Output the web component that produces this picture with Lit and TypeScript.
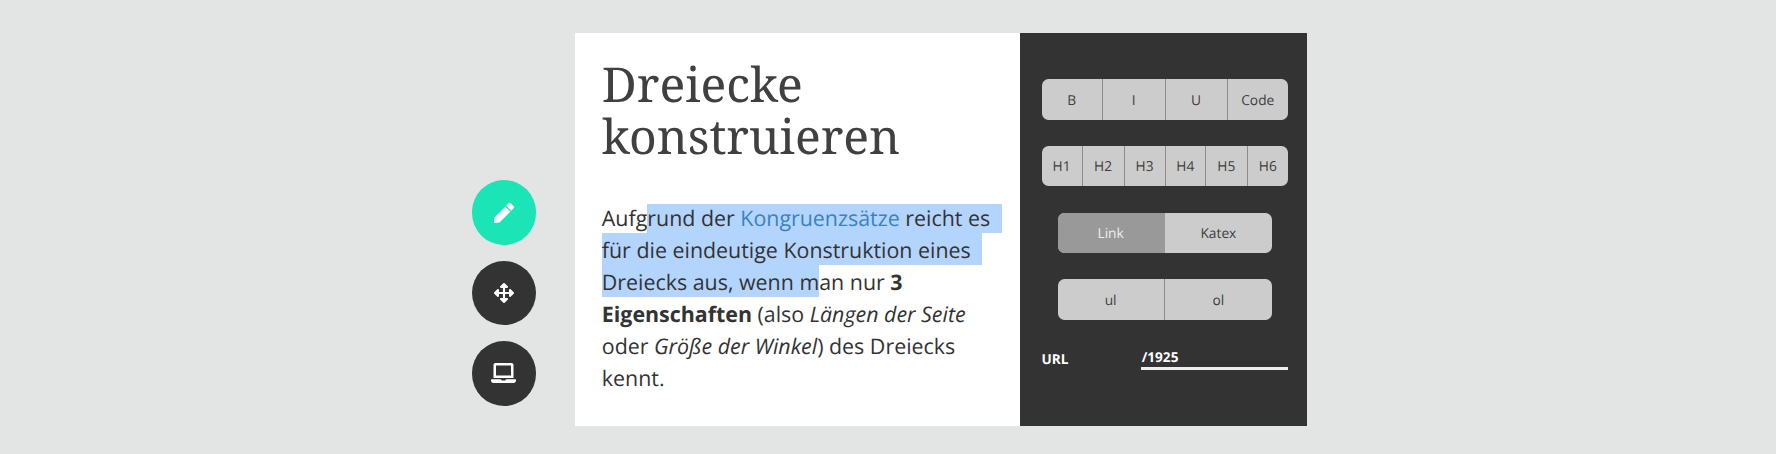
import { LitElement, html, css } from "lit";
import { customElement, property } from "lit/decorators.js";

@customElement("button-group")
class ButtonGroup extends LitElement {
  @property({ attribute: false }) items: string[] = [];
  @property() active = "";
  @property({ attribute: false }) widths = "";
  static styles = css`
    :host { display: block; }
    .group { display: grid; height: 40.5px; border-radius: 6.5px; overflow: hidden; background: #ccc; }
    button {
      all: unset; box-sizing: border-box; display: flex; align-items: center; justify-content: center;
      font: 13.75px "Open Sans", sans-serif; color: #404040; border-right: 1px solid #8b8b8b;
      text-rendering: geometricPrecision; padding-top: 1.6px;
    }
    button:last-child { border-right: 0; }
    button.active { background: #999; color: #eee; border-color: #999; }
  `;
  render() {
    return html`<div class="group" style="grid-template-columns:${this.widths}">
      ${this.items.map((i) => html`<button class=${i === this.active ? "active" : ""}>${i}</button>`)}
    </div>`;
  }
}

const penIcon = html`<svg class="icon" viewBox="0 0 512 512"><path d="M290.74 93.24l128.02 128.02-277.99 277.99-114.14 12.6C11.35 513.54-1.56 500.62.14 485.34l12.7-114.22 277.9-277.88zm207.2-19.06l-60.11-60.11c-18.75-18.75-49.16-18.75-67.91 0l-56.55 56.55 128.02 128.02 56.55-56.55c18.75-18.76 18.75-49.16 0-67.91z"/></svg>`;
const moveIcon = html`<svg class="icon" viewBox="0 0 512 512"><path d="M352.201 425.775l-79.196 79.196c-9.373 9.373-24.568 9.373-33.941 0l-79.196-79.196c-15.119-15.119-4.411-40.971 16.971-40.97h51.162L228 284H127.196v51.162c0 21.382-25.851 32.09-40.971 16.971L7.029 272.937c-9.373-9.373-9.373-24.569 0-33.941L86.225 159.8c15.119-15.119 40.971-4.411 40.971 16.971V228H228V127.196h-51.23c-21.382 0-32.09-25.851-16.971-40.971l79.196-79.196c9.373-9.373 24.568-9.373 33.941 0l79.196 79.196c15.119 15.119 4.411 40.971-16.971 40.971h-51.162V228h100.804v-51.162c0-21.382 25.851-32.09 40.97-16.971l79.196 79.196c9.373 9.373 9.373 24.569 0 33.941L425.773 352.2c-15.119 15.119-40.971 4.411-40.97-16.971V284H284v100.804h51.23c21.382 0 32.09 25.851 16.971 40.971z"/></svg>`;
const laptopIcon = html`<svg class="icon wide" viewBox="0 0 640 512"><path d="M624 416H381.54c-.74 19.81-14.71 32-32.74 32H288c-18.69 0-33.02-17.47-32.77-32H16c-8.8 0-16 7.2-16 16v16c0 35.2 28.8 64 64 64h512c35.2 0 64-28.8 64-64v-16c0-8.8-7.2-16-16-16zM576 48c0-26.4-21.6-48-48-48H112C85.6 0 64 21.6 64 48v336h512V48zm-64 272H128V64h384v256z"/></svg>`;

@customElement("app-root")
class AppRoot extends LitElement {
  static styles = css`
    :host { display: block; }
    .page {
      box-sizing: border-box; height: 454px; background: #e3e5e4; overflow: hidden;
      display: flex; padding: 32.5px 0 0 471.5px; font-family: "Open Sans", sans-serif;
      text-rendering: geometricPrecision;
    }
    .tools { display: flex; flex-direction: column; gap: 15.7px; width: 103.5px; padding-top: 147.7px; }
    .tool {
      all: unset; width: 64.8px; height: 64.8px; border-radius: 50%; background: #333;
      display: flex; align-items: center; justify-content: center;
    }
    .tool.on { background: #1be4b6; }
    .icon { width: 20px; height: 20px; fill: #fff; }
    .icon.wide { width: 25px; margin-bottom: 1px; }
    .card { display: flex; height: 393.5px; width: 732px; }
    .editor { width: 445px; background: #fff; box-sizing: border-box; padding: 26.5px 0 0 26.8px; white-space: nowrap; }
    h1 { margin: 0; font: 400 48.1px/52px "Noto Serif", "Droid Serif", "DejaVu Serif", serif; color: #404040; }
    h1 span { display: block; }
    p { margin: 40px 0 0; font-size: 21.4px; line-height: 32px; color: #333; }
    .sel { background: #b3d4fd; }
    .trail { padding-right: 11.5px; }
    .joined { padding-top: 3px; }
    .link { color: #3983c3; }
    .panel {
      flex: 1; background: #333; box-sizing: border-box; padding: 46.5px 19px 0 21.5px;
      display: flex; flex-direction: column; gap: 26.3px;
    }
    .inset { padding: 0 16px; }
    .url { display: flex; justify-content: space-between; color: #fff; font-size: 13.6px; font-weight: 700; }
    .url label { padding-top: 2.4px; }
    .field { box-sizing: border-box; width: 147.3px; height: 24px; border-bottom: 3px solid #eee; padding: 0.9px 1px 0; }
  `;
  render() {
    return html`<div class="page">
      <nav class="tools">
        <button class="tool on">${penIcon}</button>
        <button class="tool">${moveIcon}</button>
        <button class="tool">${laptopIcon}</button>
      </nav>
      <main class="card">
        <section class="editor">
          <h1><span>Dreiecke</span><span>konstruieren</span></h1>
          <p>Aufg<span class="sel trail">rund der <span class="link">Kongruenzsätze</span> reicht es</span><br />
            <span class="sel trail joined">für die eindeutige Konstruktion eines</span><br />
            <span class="sel joined">Dreiecks aus, wenn m</span>an nur <b>3</b><br />
            <b>Eigenschaften</b> (also <i>Längen der Seite</i><br />
            oder <i>Größe der Winkel</i>) des Dreiecks<br />kennt.</p>
        </section>
        <aside class="panel">
          <button-group .items=${["B", "I", "U", "Code"]} .widths=${"61.5px 62.5px 62px 1fr"}></button-group>
          <button-group .items=${["H1", "H2", "H3", "H4", "H5", "H6"]} .widths=${"41px 42px 41px 40.5px 41.5px 1fr"}></button-group>
          <button-group class="inset" active="Link" .items=${["Link", "Katex"]} .widths=${"1fr 1fr"}></button-group>
          <button-group class="inset" .items=${["ul", "ol"]} .widths=${"1fr 1fr"}></button-group>
          <div class="url"><label>URL</label><div class="field">/1925</div></div>
        </aside>
      </main>
    </div>`;
  }
}
